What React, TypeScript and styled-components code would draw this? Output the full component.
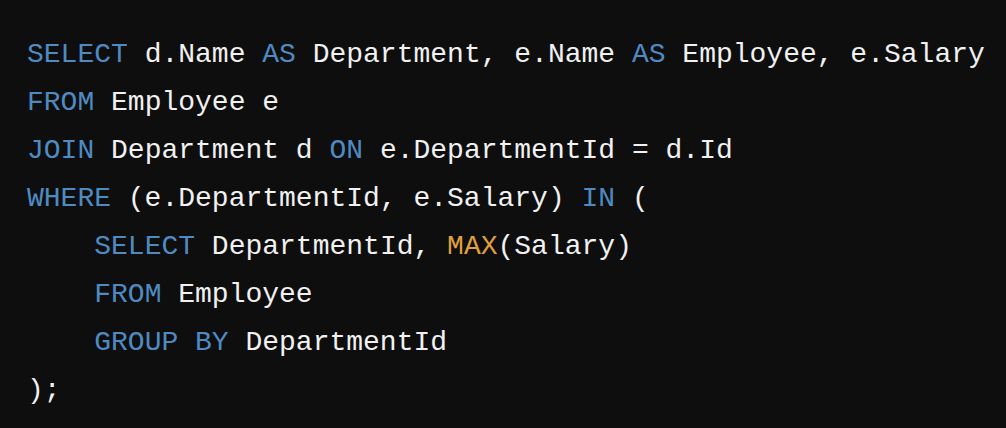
import React from "react";
import styled, { createGlobalStyle } from "styled-components";

const Global = createGlobalStyle`
  html, body { margin: 0; padding: 0; background: #0e0e0e; }
  #root { min-height: 428px; }
`;

const Block = styled.pre`
  margin: 0;
  box-sizing: border-box;
  width: 1006px;
  height: 428px;
  padding: 31px 0 0 27px;
  background: #0e0e0e;
  color: #f1f1f1;
  font-family: "Liberation Mono", "DejaVu Sans Mono", monospace;
  font-size: 28px;
  line-height: 48px;
  white-space: pre;
  overflow: hidden;
`;

const Line = styled.div`
  height: 48px;
`;

const Tok = styled.span<{ $kind: "kw" | "fn" | "tx" }>`
  color: ${(p) =>
    p.$kind === "kw" ? "#4f8bc3" : p.$kind === "fn" ? "#e0a03c" : "#f1f1f1"};
`;

type T = [string, "kw" | "fn" | "tx"];

const lines: T[][] = [
  [["SELECT", "kw"], [" d.Name ", "tx"], ["AS", "kw"], [" Department, e.Name ", "tx"], ["AS", "kw"], [" Employee, e.Salary", "tx"]],
  [["FROM", "kw"], [" Employee e", "tx"]],
  [["JOIN", "kw"], [" Department d ", "tx"], ["ON", "kw"], [" e.DepartmentId = d.Id", "tx"]],
  [["WHERE", "kw"], [" (e.DepartmentId, e.Salary) ", "tx"], ["IN", "kw"], [" (", "tx"]],
  [["    ", "tx"], ["SELECT", "kw"], [" DepartmentId, ", "tx"], ["MAX", "fn"], ["(Salary)", "tx"]],
  [["    ", "tx"], ["FROM", "kw"], [" Employee", "tx"]],
  [["    ", "tx"], ["GROUP BY", "kw"], [" DepartmentId", "tx"]],
  [[");", "tx"]],
];

export default function App() {
  return (
    <>
      <Global />
      <Block>
        {lines.map((l, i) => (
          <Line key={i}>
            {l.map(([t, k], j) => (
              <Tok key={j} $kind={k}>
                {t}
              </Tok>
            ))}
          </Line>
        ))}
      </Block>
    </>
  );
}
